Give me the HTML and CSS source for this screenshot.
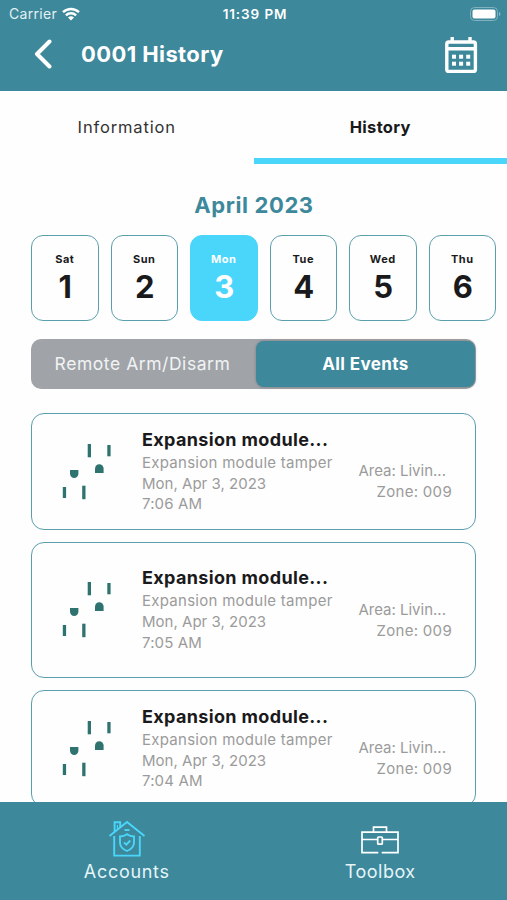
FILE: index.html
```html
<!DOCTYPE html>
<html lang="en">
<head>
    <meta charset="UTF-8">
    <meta name="viewport" content="width=device-width, initial-scale=1.0">
    <title>0001 History</title>
    <link rel="stylesheet" href="styles.css">
</head>
<body>
    <div class="app">
        <header class="header">
            <div class="status">
                <div class="carrier">
                    <span>Carrier</span>
                    <svg width="18" height="14" viewBox="0 0 18 14" fill="none" stroke="#fff" stroke-width="2.4">
                        <path d="M1 5.2a11.5 11.5 0 0 1 16 0"/>
                        <path d="M3.9 8.3a7.3 7.3 0 0 1 10.2 0"/>
                        <path d="M9 13.6L6 10.6a4.3 4.3 0 0 1 6 0z" fill="#fff" stroke="none"/>
                    </svg>
                </div>
                <div class="time">11:39 PM</div>
                <svg class="battery" width="31" height="14" viewBox="0 0 31 14">
                    <rect x="0.5" y="0.5" width="27" height="13" rx="4" fill="none" stroke="#7fb1be"/>
                    <rect x="2.5" y="2.5" width="23" height="9" rx="2" fill="#fff"/>
                    <path d="M29 5v4q1.4-.7 1.4-2T29 5z" fill="#8fbbc6"/>
                </svg>
            </div>
            <div class="titlebar">
                <svg class="back" width="18" height="30" viewBox="0 0 18 30" fill="none" stroke="#fff" stroke-width="4" stroke-linecap="round" stroke-linejoin="round">
                    <path d="M15.5 2.5L3 15l12.5 12.5"/>
                </svg>
                <h1>0001 History</h1>
                <svg class="calendar" width="34" height="38" viewBox="0 0 34 38">
                    <rect x="2.8" y="6" width="28.6" height="29.4" rx="2" fill="none" stroke="#fff" stroke-width="3.4"/>
                    <path d="M3 12.7h28M8.2 1v6M26 1v6" fill="none" stroke="#fff" stroke-width="3.4"/>
                    <g fill="#fff">
                        <rect x="8" y="18.7" width="4" height="4"/>
                        <rect x="15.1" y="18.7" width="4" height="4"/>
                        <rect x="22.2" y="18.7" width="4" height="4"/>
                        <rect x="8" y="25.7" width="4" height="4"/>
                        <rect x="15.1" y="25.7" width="4" height="4"/>
                        <rect x="22.2" y="25.7" width="4" height="4"/>
                    </g>
                </svg>
            </div>
        </header>

        <nav class="tabs">
            <div class="tab">Information</div>
            <div class="tab active">History</div>
        </nav>

        <main class="content">
            <h2 class="month">April 2023</h2>
            <div class="days">
                <div class="day"><span>Sat</span><b>1</b></div>
                <div class="day"><span>Sun</span><b>2</b></div>
                <div class="day selected"><span>Mon</span><b>3</b></div>
                <div class="day"><span>Tue</span><b>4</b></div>
                <div class="day"><span>Wed</span><b>5</b></div>
                <div class="day"><span>Thu</span><b>6</b></div>
            </div>
            <div class="switch">
                <div class="option">Remote Arm/Disarm</div>
                <div class="option on">All Events</div>
            </div>

            <div class="event">
                <svg class="outlet" width="50" height="56" viewBox="0 0 50 56"><use href="#outlet"/></svg>
                <div class="info">
                    <h3>Expansion module...</h3>
                    <p class="kind">Expansion module tamper</p>
                    <p class="date">Mon, Apr 3, 2023</p>
                    <p class="hour">7:06 AM</p>
                </div>
                <div class="place">
                    <p class="area">Area: Livin...</p>
                    <p class="zone">Zone: 009</p>
                </div>
            </div>
            <div class="event tall">
                <svg class="outlet" width="50" height="56" viewBox="0 0 50 56"><use href="#outlet"/></svg>
                <div class="info">
                    <h3>Expansion module...</h3>
                    <p class="kind">Expansion module tamper</p>
                    <p class="date">Mon, Apr 3, 2023</p>
                    <p class="hour">7:05 AM</p>
                </div>
                <div class="place">
                    <p class="area">Area: Livin...</p>
                    <p class="zone">Zone: 009</p>
                </div>
            </div>
            <div class="event">
                <svg class="outlet" width="50" height="56" viewBox="0 0 50 56"><use href="#outlet"/></svg>
                <div class="info">
                    <h3>Expansion module...</h3>
                    <p class="kind">Expansion module tamper</p>
                    <p class="date">Mon, Apr 3, 2023</p>
                    <p class="hour">7:04 AM</p>
                </div>
                <div class="place">
                    <p class="area">Area: Livin...</p>
                    <p class="zone">Zone: 009</p>
                </div>
            </div>
        </main>

        <footer class="footer">
            <div class="link">
                <svg width="38" height="38" viewBox="0 0 38 38" fill="none" stroke="#4ad6fb" stroke-width="1.9">
                    <path d="M1.5 16L19 2l17.5 14"/>
                    <path d="M6.6 11.5V2.2h5.6v5"/>
                    <path d="M9.4 5v3.5" stroke-width="1.2"/>
                    <path d="M6.2 16v19.6h25.6V16"/>
                    <path d="M16.5 10h5"/>
                    <path d="M19 14.3c2.3 1.7 4.6 2.2 7 2.2v6.2c0 4-3 6.500-7 8.300-4-1.800-7-4.300-7-8.300v-6.200c2.400 0 4.700-.5 7-2.200z"/>
                    <path d="M16 22.4l2.300 2.300 4-4.200"/>
                </svg>
                <span class="accounts">Accounts</span>
            </div>
            <div class="link">
                <svg width="38" height="38" viewBox="0 0 38 38" fill="none" stroke="#fff" stroke-width="1.7">
                    <path d="M17.3 32.700H1V12.200h36v20.500H20.700"/>
                    <path d="M12.500 12V7.200h13V12"/>
                    <path d="M1 19.500h15.500M21.500 19.500H37"/>
                    <rect x="16.700" y="17" width="4.600" height="7.200" rx="0.800"/>
                </svg>
                <span class="toolbox">Toolbox</span>
            </div>
        </footer>
    </div>

    <svg width="0" height="0" class="symbols">
        <symbol id="outlet" viewBox="0 0 50 56">
            <g fill="#2f7370">
                <rect x="25.700" y="0" width="3.300" height="13.300"/>
                <rect x="45.300" y="1" width="3.300" height="11.300"/>
                <path d="M33 29v-4.500a4.300 4.300 0 0 1 8.600 0V29z"/>
                <path d="M8 26v3.800a4.200 4.200 0 0 0 8.400 0V26z"/>
                <rect x="0.800" y="43" width="3.300" height="11"/>
                <rect x="20.200" y="41.700" width="3.300" height="13.500"/>
            </g>
        </symbol>
    </svg>
</body>
</html>
```
FILE: styles.css
```css
*{
    box-sizing: border-box;
    margin: 0;
    padding: 0;
}
body{
    background-color: #fefefe;
    font-family: Inter, "Liberation Sans", sans-serif;
    color: #1a1a1c;
}
.app{
    height: 900px;
    display: flex;
    flex-direction: column;
    overflow: hidden;
    white-space: nowrap;
}
.header{
    height: 91px;
    background-color: #3d889b;
    color: #fff;
    flex-shrink: 0;
}
.status{
    height: 27px;
    padding: 0 6px 0 9px;
    display: grid;
    grid-template-columns: 1fr auto 1fr;
    align-items: center;
    font-size: 14px;
}
.carrier{
    display: flex;
    align-items: center;
    gap: 5px;
    letter-spacing: 0.3px;
    color: #e4f0f3;
}
.time{
    font-size: 13.5px;
    font-weight: 600;
    letter-spacing: 0.9px;
}
.battery{
    justify-self: end;
}
.titlebar{
    height: 54px;
    padding: 0 29px 0 34px;
    display: flex;
    align-items: center;
}
h1{
    margin-left: 29px;
    font-size: 22px;
    font-weight: 700;
    letter-spacing: 0.4px;
}
.calendar{
    margin-left: auto;
    margin-top: 2px;
}
.tabs{
    display: flex;
    height: 73px;
    flex-shrink: 0;
}
.tab{
    flex: 1;
    text-align: center;
    line-height: 73px;
    font-size: 16.5px;
    letter-spacing: 0.85px;
    color: #333;
}
.tab.active{
    font-weight: 700;
    letter-spacing: 0.3px;
    color: #1a1a1c;
    border-bottom: 6px solid #4ad6fb;
}
.content{
    flex: 1;
    min-height: 0;
    overflow: hidden;
    padding: 27px 31px 0;
}
.month{
    padding-left: 1px;
    text-align: center;
    font-size: 22px;
    line-height: 28px;
    font-weight: 700;
    letter-spacing: 0.6px;
    color: #3d889b;
}
.days{
    display: flex;
    gap: 12px;
    margin-top: 16px;
}
.day{
    width: 67.5px;
    height: 86px;
    flex-shrink: 0;
    display: flex;
    flex-direction: column;
    align-items: center;
    padding-top: 16px;
    border: 1.5px solid #5b9fae;
    border-radius: 12px;
}
.day span{
    font-size: 11px;
    line-height: 14px;
    font-weight: 700;
    letter-spacing: 0.5px;
}
.day b{
    padding-left: 1px;
    font-size: 31px;
    line-height: 41px;
}
.day.selected{
    background-color: #4ad6fb;
    border-color: #4ad6fb;
    color: #fff;
}
.switch{
    display: flex;
    width: 445px;
    height: 50px;
    margin-top: 18px;
    padding: 2px 0 2px 1px;
    border-radius: 10px;
    background-color: #a0a4a8;
}
.option{
    width: 224px;
    padding-right: 3px;
    text-align: center;
    font-size: 17.5px;
    line-height: 46px;
    letter-spacing: 0.55px;
    color: #f1f3f4;
}
.option.on{
    width: 219px;
    padding-right: 0;
    border-radius: 8px;
    background-color: #3d889b;
    box-shadow: 0 0 3px rgba(60, 60, 60, 0.4);
    color: #fff;
    font-size: 17px;
    font-weight: 700;
    letter-spacing: 0.4px;
}
.event{
    display: flex;
    align-items: center;
    width: 445px;
    height: 117px;
    margin-top: 12px;
    padding: 0 23px 0 30px;
    border: 1.5px solid #5b9fae;
    border-radius: 13px;
}
.switch + .event{
    margin-top: 24px;
}
.event.tall{
    height: 136px;
}
.info{
    margin-left: 30px;
}
.info p, .place p{
    font-size: 15px;
    line-height: 20.7px;
    color: #9b9b9b;
}
h3{
    font-size: 18px;
    line-height: 26px;
    font-weight: 700;
    letter-spacing: 0.35px;
    margin-top: -1px;
}
.info .kind{
    letter-spacing: 0.27px;
}
.info .date{
    letter-spacing: 0.02px;
}
.hour{
    letter-spacing: 0.15px;
}
.place{
    margin-left: auto;
    margin-top: 21px;
    text-align: right;
}
.area{
    padding-right: 6px;
}
.zone{
    letter-spacing: 0.3px;
}
.footer{
    display: flex;
    height: 98px;
    flex-shrink: 0;
    background-color: #3d889b;
    color: #e6f5f9;
}
.link{
    flex: 1;
    display: flex;
    flex-direction: column;
    align-items: center;
    padding-top: 18px;
    font-size: 18px;
    line-height: 27px;
    letter-spacing: 0.5px;
}
.accounts{
    letter-spacing: 0.7px;
}
.symbols{
    position: absolute;
}
```
